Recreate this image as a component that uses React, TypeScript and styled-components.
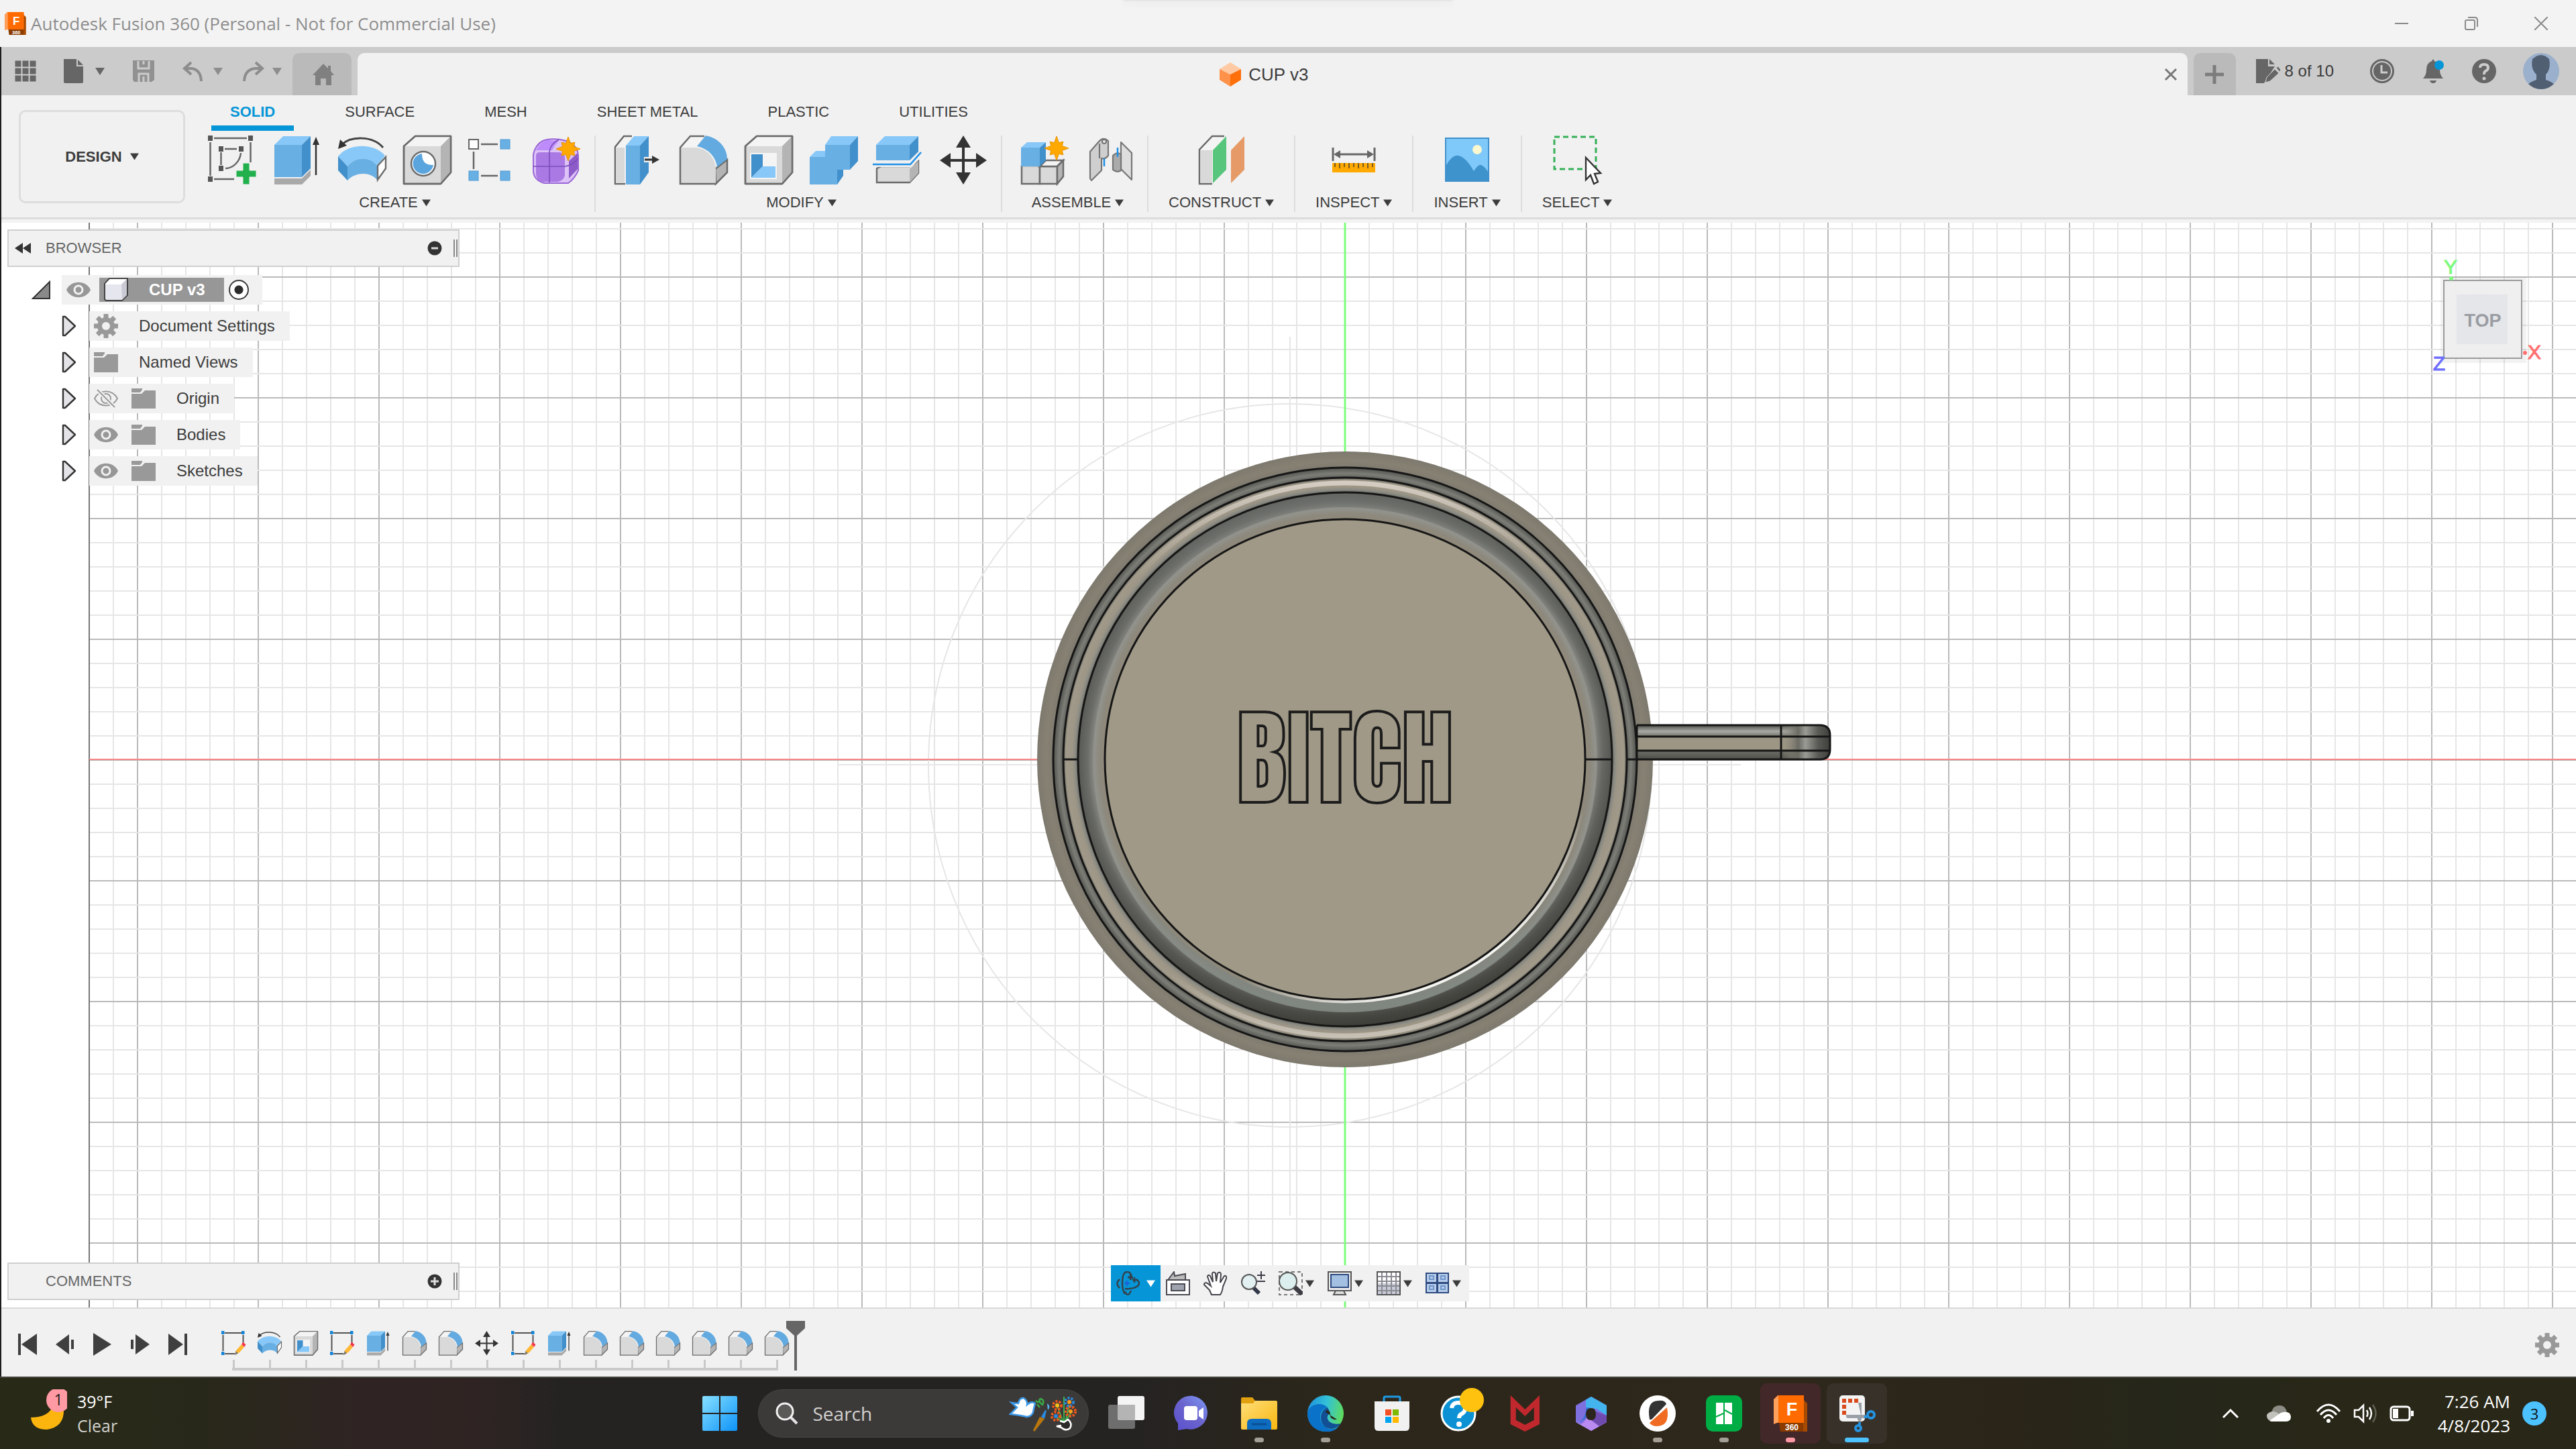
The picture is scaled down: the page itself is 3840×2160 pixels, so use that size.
import React from 'react';
import styled, { createGlobalStyle } from 'styled-components';

const UI = `"Liberation Sans", Arial, sans-serif`;
const SYS = `"Open Sans", "Noto Sans", sans-serif`;
const EDGE = '#6b6b6b';

const GlobalStyle = createGlobalStyle`
  * { box-sizing: border-box; }
  body { margin: 0; background: #f1f1f1; font-family: ${UI}; color: #3c3c3c; }
  button { font: inherit; color: inherit; background: none; border: 0; padding: 0; margin: 0; cursor: pointer; }
  svg { display: block; flex: none; }
  ul { list-style: none; margin: 0; padding: 0; }
`;

/* ---------- layout parts ---------- */

const Shell = styled.div`
  display: flex;
  flex-direction: column;
  min-height: 100vh;
`;

const AppFrame = styled.div`
  display: flex;
  flex-direction: column;
  flex: 1;
  border-left: 2px solid #1c1c1c;
`;

const TitleBar = styled.header`
  position: relative;
  display: flex;
  align-items: center;
  height: 70px;
  padding-left: 6px;
  background: #f3f3f3;
  font-family: ${SYS};
`;

const TitleText = styled.h1`
  flex: 1;
  margin: 0 0 0 6px;
  font-size: 26px;
  font-weight: 400;
  line-height: 36px;
  color: #8e8e8e;
`;

const DragHandle = styled.div`
  position: absolute;
  top: 0;
  left: 50%;
  width: 490px;
  height: 2px;
  margin-left: -245px;
  background: #e6e6e6;
  box-shadow: 0 2px 12px #dcdcdc;
`;

const WindowButton = styled.button`
  display: flex;
  align-items: center;
  justify-content: center;
  width: 104px;
  height: 68px;
`;

const TabBar = styled.div`
  display: flex;
  align-items: flex-end;
  height: 72px;
  background: #cbcbcb;
`;

const QuickAccess = styled.div`
  display: flex;
  align-items: center;
  align-self: center;
  gap: 39px;
  padding: 0 15px 0 18px;
`;

const ToolPair = styled.div`
  display: flex;
  align-items: center;
  gap: 10px;
`;

const HistoryTools = styled.div`
  display: flex;
  gap: 26px;
`;

const PlainButton = styled.button`
  display: flex;
  align-items: center;
  justify-content: center;
`;

const SmallTab = styled.button<{ $w: number }>`
  display: flex;
  align-items: center;
  justify-content: center;
  width: ${(p) => p.$w}px;
  height: 63px;
  margin-right: 9px;
  border-radius: 10px 10px 0 0;
  background: #bababa;
`;

const DocumentTab = styled.div`
  display: flex;
  flex: 1;
  align-items: center;
  height: 63px;
  margin-right: 9px;
  padding-left: 24px;
  border-radius: 10px 10px 0 0;
  background: #f1f1f1;
`;

const DocumentName = styled.div`
  display: flex;
  flex: 1;
  align-items: center;
  justify-content: center;
  gap: 10px;
  font-size: 26px;
  line-height: 32px;
`;

const CloseTab = styled(PlainButton)`
  width: 50px;
  height: 50px;
`;

const AccountTools = styled.div`
  display: flex;
  align-items: center;
  align-self: center;
  gap: 40px;
  padding: 0 25px 0 21px;
`;

const DocumentCount = styled.div`
  display: flex;
  align-items: center;
  gap: 6px;
  margin-right: 14px;
  font-size: 24px;
  line-height: 30px;
`;

const Ribbon = styled.div`
  display: flex;
  align-items: flex-start;
  height: 190px;
  padding-left: 26px;
  background: linear-gradient(#f1f1f1 182px, #dcdcdc 182px, #dcdcdc 185px, #f3f3f3 185px);
`;

const Workspace = styled.button`
  display: flex;
  align-items: center;
  justify-content: center;
  gap: 12px;
  width: 248px;
  height: 139px;
  margin: 22px 6px 0 0;
  border: 3px solid #dddddd;
  border-radius: 10px;
  font-size: 22px;
  font-weight: 700;
  line-height: 26px;
`;

const RibbonBody = styled.div`
  flex: 1;
`;

const RibbonTabs = styled.nav`
  display: flex;
  gap: 48px;
  padding-left: 33px;
`;

const RibbonTab = styled.button<{ $active?: boolean }>`
  height: 53px;
  padding: 4px 28px 0;
  border-bottom: 8px solid ${(p) => (p.$active ? '#0696d7' : 'transparent')};
  color: ${(p) => (p.$active ? '#0696d7' : 'inherit')};
  font-size: 22px;
  font-weight: ${(p) => (p.$active ? 700 : 400)};
  line-height: 26px;
`;

const Groups = styled.div`
  display: flex;
  padding-top: 7px;
`;

const Group = styled.section<{ $single?: boolean }>`
  display: flex;
  flex-direction: column;
  align-items: center;
  gap: 13px;
  height: 114px;
  padding: ${(p) => (p.$single ? '0 30px' : '0 19px 0 28px')};
  border-right: 2px solid #dcdcdc;
  &:last-child { border-right: 0; }
`;

const GroupIcons = styled.div`
  display: flex;
  gap: 25px;
`;

const GroupLabel = styled.button`
  display: flex;
  align-items: center;
  gap: 6px;
  font-size: 22px;
  line-height: 26px;
`;

const Viewport = styled.main`
  position: relative;
  display: flex;
  flex: 1;
  background: #ffffff;
`;

const Scene = styled.svg`
  position: absolute;
  inset: 0;
  width: 100%;
  height: 100%;
`;

const Overlay = styled.div`
  position: relative;
  display: grid;
  flex: 1;
  grid-template-columns: 1fr auto 1fr;
  grid-template-rows: 1fr auto;
  padding: 10px 40px 9px 9px;
`;

const CubeSlot = styled.div`
  display: flex;
  justify-content: flex-end;
  padding-top: 28px;
`;

const Browser = styled.aside`
  grid-column: 1 / 3;
`;

const PanelBar = styled.div`
  display: flex;
  align-items: center;
  width: 674px;
  height: 56px;
  padding: 0 1px 0 9px;
  border: 2px solid #cfcfcf;
  background: #f1f1f1;
  color: #666666;
  font-size: 22px;
  line-height: 26px;
`;

const PanelLead = styled.span`
  display: flex;
  width: 46px;
`;

const PanelTitle = styled.span`
  flex: 1;
`;

const Grip = styled.span`
  width: 6px;
  height: 26px;
  margin-left: 17px;
  border: solid #8a8a8a;
  border-width: 0 2px;
`;

const Tree = styled.ul`
  display: flex;
  flex-direction: column;
  gap: 10px;
  padding-top: 12px;
`;

const TreeRow = styled.li<{ $root?: boolean }>`
  display: flex;
  align-items: center;
  gap: ${(p) => (p.$root ? 16 : 19)}px;
  padding-left: ${(p) => (p.$root ? 36 : 81)}px;
`;

const TreeEntry = styled.div<{ $root?: boolean }>`
  display: flex;
  align-items: center;
  gap: ${(p) => (p.$root ? 7 : 20)}px;
  height: 44px;
  padding: 0 ${(p) => (p.$root ? 20 : 22)}px 0 7px;
  background: #f1f1f1;
  font-size: 24px;
  line-height: 30px;
`;

const TreeName = styled.span`
  padding-left: 11px;
`;

const Selected = styled.span`
  display: flex;
  align-items: center;
  gap: 30px;
  height: 36px;
  padding: 0 28px 0 6px;
  margin-left: 6px;
  background: #979797;
  color: #ffffff;
  font-size: 24px;
  font-weight: 700;
`;

const ActivateRadio = styled.input`
  appearance: none;
  width: 30px;
  height: 30px;
  margin: 0;
  border: 2px solid #3a3a3a;
  border-radius: 50%;
  background: radial-gradient(circle, #2b2b2b 6px, #ffffff 7px);
`;

const CommentsSlot = styled.div`
  margin-bottom: 2px;
`;

const NavBar = styled.div`
  display: flex;
  align-self: end;
  height: 54px;
  margin-left: 35px;
  background: #f1f1f1;
`;

const NavTool = styled.button<{ $active?: boolean }>`
  display: flex;
  align-items: center;
  gap: ${(p) => (p.$active ? 10 : 4)}px;
  padding: 0 ${(p) => (p.$active ? '8px 0 7px' : '12px 0 8px')};
  background: ${(p) => (p.$active ? '#0696d7' : 'transparent')};
  color: ${(p) => (p.$active ? '#ffffff' : '#3c3c3c')};
`;

const Timeline = styled.footer`
  display: flex;
  align-items: flex-end;
  height: 103px;
  padding: 0 25px 9px;
  border-top: 2px solid #d9d9d9;
  background: #f1f1f1;
`;

const Playback = styled.div`
  display: flex;
  gap: 28px;
  margin: 0 51px 21px 0;
`;

const Features = styled.div``;

const FeatureList = styled.ul`
  display: flex;
  gap: 18px;
`;

const Feature = styled.li`
  display: flex;
  flex-direction: column;
  align-items: center;
  gap: 6px;
  &::after { content: ''; width: 3px; height: 12px; background: #c9c9c9; }
`;

const Rail = styled.div`
  height: 4px;
  margin: 0 16px;
  background: #c9c9c9;
`;

const MarkerSlot = styled.div`
  flex: 1;
  margin-left: -4px;
`;

const SettingsSlot = styled(PlainButton)`
  margin-bottom: 20px;
`;

const Taskbar = styled.div`
  display: grid;
  grid-template-columns: 1fr auto 1fr;
  align-items: center;
  height: 108px;
  border-top: 2px solid #45453f;
  background: linear-gradient(90deg, #282a17 0%, #28281a 8%, #2f2423 14%, #302423 18%, #242322 22%, #252322 44%, #2c271a 52%, #2e271c 70%, #2a2518 78%, #25271a 84%, #282718 90%, #282718 100%);
  color: #ffffff;
  font-family: ${SYS};
  font-size: 25px;
  line-height: 36px;
`;

const Weather = styled.button`
  display: flex;
  align-items: center;
  gap: 15px;
  padding-left: 44px;
  text-align: left;
`;

const Muted = styled.div`
  color: #d0d0cb;
`;

const TaskItems = styled.div`
  display: flex;
  align-items: center;
  gap: 9px;
`;

const TaskButton = styled.button<{ $bg?: string }>`
  position: relative;
  display: flex;
  align-items: center;
  justify-content: center;
  width: 90px;
  height: 90px;
  border-radius: 10px;
  background: ${(p) => p.$bg || 'transparent'};
`;

const RunDot = styled.span<{ $w: number; $c: string }>`
  position: absolute;
  bottom: 2px;
  left: 50%;
  width: ${(p) => p.$w}px;
  height: 7px;
  border-radius: 4px;
  background: ${(p) => p.$c};
  transform: translateX(-50%);
`;

const SearchBox = styled.label`
  display: flex;
  align-items: center;
  width: 493px;
  height: 72px;
  margin: 0 2px 0 3px;
  padding: 0 16px 0 25px;
  border: 1px solid #484644;
  border-radius: 36px;
  background: #3c3a39;
`;

const SearchInput = styled.input`
  flex: 1;
  min-width: 0;
  margin-left: 22px;
  padding: 0;
  border: 0;
  outline: 0;
  background: transparent;
  color: #ffffff;
  font: 28px/36px ${SYS};
  &::placeholder { color: #d2d0ce; opacity: 1; }
`;

const Tray = styled.div`
  display: flex;
  align-items: center;
  justify-content: flex-end;
  gap: 18px;
  padding-right: 44px;
`;

const TrayGap = styled.span<{ $w: number }>`
  width: ${(p) => p.$w}px;
`;

const Clock = styled.div`
  font-size: 26px;
  text-align: right;
`;

const Badge = styled.span`
  display: flex;
  align-items: center;
  justify-content: center;
  width: 36px;
  height: 36px;
  border-radius: 50%;
  background: #4cc2ff;
  color: #101010;
  font-size: 22px;
`;

/* ---------- small glyphs ---------- */

const Caret = ({ w = 14, c = 'currentColor' }: { w?: number; c?: string }) => (
  <svg width={w} height={11} viewBox="0 0 14 11"><path d="M0 0H14L7 11Z" fill={c} /></svg>
);

const Tool = ({ size = 72, children }: { size?: number; children: React.ReactNode }) => (
  <svg width={size} height={size === 72 ? 74 : 37} viewBox="0 0 72 74" overflow="visible">{children}</svg>
);

const Star = ({ x, y }: { x: number; y: number }) => {
  const pts = Array.from({ length: 16 }, (_, i) => {
    const a = (i * Math.PI) / 8;
    const r = i % 2 ? 9 : i % 4 ? 14 : 18;
    return `${x + r * Math.sin(a)},${y - r * Math.cos(a)}`;
  }).join(' ');
  return <polygon points={pts} fill="#ffa800" stroke="#e89400" strokeWidth={1} />;
};

const Gear = ({ c = '#999999', hole = '#f1f1f1' }) => (
  <svg width={36} height={36} viewBox="-18 -18 36 36">
    {[0, 45, 90, 135].map((a) => <rect key={a} x={-3.5} y={-18} width={7} height={36} fill={c} transform={`rotate(${a})`} />)}
    <circle r={13} fill={c} />
    <circle r={6} fill={hole} />
  </svg>
);

const Eye = ({ off }: { off?: boolean }) => (
  <svg width={36} height={36} viewBox="0 0 36 36">
    {off ? (
      <g fill="none" stroke="#9a9a9a" strokeWidth={2}>
        <path d="M1 18C8 4 28 4 35 18C28 32 8 32 1 18Z" />
        <circle cx={18} cy={18} r={7} /><circle cx={18} cy={18} r={2} />
        <path d="M5 5L31 31" stroke="#f1f1f1" strokeWidth={6} /><path d="M5 5L31 31" />
      </g>
    ) : (
      <g>
        <path d="M0 18C7 3 29 3 36 18C29 33 7 33 0 18Z" fill="#979797" />
        <circle cx={18} cy={18} r={6} fill="#979797" stroke="#f1f1f1" strokeWidth={3} />
      </g>
    )}
  </svg>
);

const Folder = () => (
  <svg width={36} height={36} viewBox="0 0 36 36">
    <path d="M0 3H16V5L13 9H0Z" fill="#999999" />
    <path d="M0 11H15L20 6H36V33H0Z" fill="#999999" />
  </svg>
);

const Expander = () => (
  <svg width={22} height={32} viewBox="0 0 22 32"><path d="M2 2H5L20 16L5 30H2Z" fill="#e4e4e8" stroke="#333" strokeWidth={2.4} strokeLinejoin="round" /></svg>
);

/* ---------- modelling tool icons ---------- */

const SketchIcon = () => (
  <Tool>
    <g stroke="#666" strokeWidth={2.5} fill="none">
      <path d="M9 4H58M3.500 10V60M63.500 10V40M9 65H39M25 20H43M19.500 25V44M49 26C48 38 38 49 26 49" />
    </g>
    <g fill="#555"><path d="M0 0H7V8H0ZM60 0H67V8H60ZM0 61H7V69H0ZM16 16H23V24H16ZM46 16H53V24H46ZM16 45H23V53H16Z" /></g>
    <path d="M52 41H62V52H72V62H62V73H52V62H42V52H52Z" fill="#22b04c" stroke="#f1f1f1" strokeWidth={1} />
  </Tool>
);

const ExtrudeIcon = ({ size }: { size?: number }) => (
  <Tool size={size}>
    <path d="M2 64H43L56 51V60L43 73H2Z" fill="#a9a9a9" />
    <path d="M2 14L15 1H56L43 14Z" fill="#88c8f8" /><path d="M2 14H43V62H2Z" fill="#68afe4" /><path d="M43 14L56 1V49L43 62Z" fill="#4290cb" />
    <path d="M64 10V59" stroke="#333" strokeWidth={2.5} /><path d="M64 2L69 14H59Z" fill="#333" />
  </Tool>
);

const RevolveIcon = ({ size }: { size?: number }) => (
  <Tool size={size}>
    <path d="M4 15C18 0 52 0 67 18" fill="none" stroke="#444" strokeWidth={3} /><path d="M0 20L3 6L13 15Z" fill="#333" />
    <path d="M0 31C16 11 54 11 70 30L58 45C48 31 26 31 14 46Z" fill="#88c8f8" />
    <path d="M0 31L14 46V67L0 52Z" fill="#4290cb" />
    <path d="M14 46C26 31 48 31 58 45V66C48 54 26 54 14 67Z" fill="#68afe4" />
    <path d="M59 45L71 32V49L59 66Z" fill="#fff" stroke={EDGE} strokeWidth={2.4} />
  </Tool>
);

const Box = () => (
  <g stroke={EDGE} strokeWidth={2.5} strokeLinejoin="round">
    <path d="M1 16L18 1H71V55L56 72H1Z" fill="#d9d9d9" /><path d="M1 16L18 1H71L56 16Z" fill="#f4f4f4" stroke="none" />
    <path d="M56 16L71 1V55L56 72Z" fill="#b4b4b4" stroke="none" /><path d="M1 16L18 1H71V55L56 72H1Z" fill="none" />
  </g>
);

const HoleIcon = () => (
  <Tool>
    <Box />
    <circle cx={30} cy={42} r={18} fill="#fff" stroke={EDGE} strokeWidth={2.5} />
    <path d="M28 27C28 40 34 44 45 44C43 54 34 58 28 57C10 54 10 30 28 27Z" fill="#5aa5de" />
  </Tool>
);

const PatternIcon = () => (
  <Tool>
    <path d="M19 13H44M8 24V50M19 60H44" stroke="#666" strokeWidth={2.5} />
    <rect x={1} y={6} width={14} height={14} fill="#fff" stroke="#666" strokeWidth={2} />
    <g fill="#68afe4" stroke="#4d9ad3"><rect x={48} y={6} width={14} height={14} /><rect x={1} y={53} width={14} height={14} /><rect x={48} y={53} width={14} height={14} /></g>
  </Tool>
);

const FormIcon = () => (
  <Tool>
    <path d="M0 28Q3 14 14 8Q24 4 40 6Q66 10 67 30V52Q62 64 52 71H16Q0 66 0 52Z" fill="#dcc2f7" stroke="#9a66d8" strokeWidth={2} />
    <path d="M4 22Q10 10 20 7L38 8Q32 14 28 22Z" fill="#bd8cfa" />
    <path d="M4 30Q4 25 10 25H38Q46 26 47 32V60Q44 68 36 69H14Q5 67 4 58Z" fill="#aa79e4" />
    <path d="M53 38L66 26V50L53 64Z" fill="#8d5cc9" />
    <path d="M24 24V70M0 46H47Q58 45 67 34M24 24Q26 12 38 6" fill="none" stroke="#7c4cbb" strokeWidth={1.600} />
    <Star x={52} y={20} />
  </Tool>
);

const PressPullIcon = () => (
  <Tool>
    <path d="M16 72H1V17L14 1H26" fill="#f3f3f3" stroke={EDGE} strokeWidth={2.5} /><path d="M2 18H15V71H2Z" fill="#d9d9d9" />
    <path d="M17 15L29 1H51L38 15Z" fill="#88c8f8" /><path d="M17 15H38V73H17Z" fill="#68afe4" /><path d="M38 15L51 1V55L38 73Z" fill="#4290cb" />
    <path d="M44 36H58" stroke="#f1f1f1" strokeWidth={8} /><path d="M45 36H60" stroke="#333" strokeWidth={3} /><path d="M67 36L56 30V42Z" fill="#333" />
  </Tool>
);

const FilletIcon = ({ size }: { size?: number }) => (
  <Tool size={size}>
    <path d="M53 50L71 36V55L54 72Z" fill="#b4b4b4" stroke={EDGE} strokeWidth={2.500} />
    <path d="M1 18L16 1H38L25 18Z" fill="#f4f4f4" />
    <path d="M1 18H24C42 20 53 34 54 50V72H1Z" fill="#d9d9d9" />
    <path d="M37 1H16L1 18V72H54" fill="none" stroke={EDGE} strokeWidth={2.5} />
    <path d="M26 16L39 0C60 4 71 20 71 35L56 47C54 32 44 20 26 16Z" fill="#62aae0" />
  </Tool>
);

const ShellIcon = ({ size }: { size?: number }) => (
  <Tool size={size}>
    <Box />
    <path d="M8 26H48V65H8Z" fill="#f4f4f4" /><path d="M10 28H27V46L10 63Z" fill="#4290cb" /><path d="M27 46H46V63H10Z" fill="#88c8f8" />
  </Tool>
);

const CombineIcon = () => (
  <Tool>
    <path d="M0 32L9 23H24V32Z" fill="#88c8f8" /><path d="M0 32H23V14H60V51H41V73H0Z" fill="#68afe4" />
    <path d="M23 14L32 1H72L60 14Z" fill="#88c8f8" /><path d="M60 14L72 1V38L60 51Z" fill="#4290cb" /><path d="M41 51H50V60L41 73Z" fill="#4290cb" />
  </Tool>
);

const SplitIcon = () => (
  <Tool>
    <path d="M3 49L10 46H52L65 38V56L52 70H3Z" fill="#d9d9d9" stroke={EDGE} strokeWidth={2.400} /><path d="M52 50L65 38V56L52 70Z" fill="#b4b4b4" />
    <path d="M2 14L15 1H65L52 14Z" fill="#88c8f8" /><path d="M2 14H52V37H2Z" fill="#68afe4" /><path d="M52 14L65 1V24L52 37Z" fill="#4290cb" />
    <path d="M-3 43H53L70 26" fill="none" stroke="#f1f1f1" strokeWidth={8} /><path d="M-3 43H53L69 25" fill="none" stroke="#1d8fe6" strokeWidth={2.500} />
  </Tool>
);

const MoveIcon = ({ size }: { size?: number }) => (
  <Tool size={size}>
    <path d="M35 12V62M10 37H60" stroke="#333" strokeWidth={4} />
    <path d="M35 0L46 18H24ZM35 73L46 55H24ZM0 37L16 26V48ZM70 37L54 26V48Z" fill="#333" />
  </Tool>
);

const ComponentIcon = () => (
  <Tool>
    <g stroke={EDGE} strokeWidth={2.500}><path d="M1 45H28V72H1Z" fill="#d9d9d9" /><path d="M28 46H54V72H28Z" fill="#d9d9d9" /><path d="M28 46L37 37H63L54 46Z" fill="#f4f4f4" /><path d="M54 46L63 37V61L54 72Z" fill="#b4b4b4" /></g>
    <path d="M0 18L9 10H37L28 18Z" fill="#88c8f8" /><path d="M0 18H28V46H0Z" fill="#68afe4" /><path d="M28 18L37 10V37L28 46Z" fill="#4290cb" />
    <Star x={53} y={19} />
  </Tool>
);

const JointIcon = () => (
  <Tool>
    <g stroke="#777" strokeWidth={2.2} strokeLinejoin="round">
      <path d="M6 24L20 8Q26 2 33 8V30Q28 36 23 34V52L8 67L6 64Z" fill="#cfcfcf" />
      <path d="M20 12V34" /><circle cx={27} cy={9} r={3} fill="#eee" />
      <path d="M52 10L68 26V66L52 50Z" fill="#dedede" /><path d="M40 30Q46 24 52 28V52Q46 56 40 51Z" fill="#aaa" />
    </g>
    <path d="M27 34V46M47 18V32" stroke="#1d8fe6" strokeWidth={2.5} />
  </Tool>
);

const PlaneIcon = () => (
  <Tool>
    <path d="M22 72H3V21L22 1H40" fill="#f4f4f4" stroke={EDGE} strokeWidth={2.5} /><path d="M4 22H22V70H4Z" fill="#d9d9d9" />
    <path d="M23 22L43 1V51L23 71Z" fill="#57c67c" /><path d="M50 22L70 1V51L50 71Z" fill="#e59a67" />
  </Tool>
);

const MeasureIcon = () => (
  <Tool>
    <path d="M5 18V38M67 18V38M12 28H60" stroke="#666" strokeWidth={3} /><path d="M6 28L16 22V34ZM66 28L56 22V34Z" fill="#666" />
    <path d="M4 41H68V55H4Z" fill="#ffaa00" /><path d="M8 41V47M15 41V49M22 41V47M29 41V49M36 41V47M43 41V49M50 41V47M57 41V49M64 41V47" stroke="#7a5a20" strokeWidth={2} />
  </Tool>
);

const InsertIcon = () => (
  <Tool>
    <rect x={4} y={4} width={64} height={64} fill="#7fc8fa" stroke="#3f90cc" strokeWidth={2} /><circle cx={51} cy={21} r={7} fill="#fbf8cf" />
    <path d="M5 44Q14 28 23 30Q34 32 46 53Q53 42 57 44Q62 46 67 54V67H5Z" fill="#3f93cd" />
  </Tool>
);

const SelectIcon = () => (
  <Tool>
    <rect x={2} y={2} width={62} height={48} fill="none" stroke="#35b058" strokeWidth={3} strokeDasharray="8 5" />
    <path d="M49 33V66L56 59L61 72L67 69L62 57L71 56Z" fill="#fff" stroke="#333" strokeWidth={2.400} />
  </Tool>
);

const SketchEditIcon = ({ size }: { size?: number }) => (
  <Tool size={size}>
    <path d="M10 6H60M5 12V60M65 12V40M10 68H40" stroke="#555" strokeWidth={4} />
    <path d="M0 0H9V10H0ZM60 0H69V10H60ZM0 62H9V72H0Z" fill="#1583d6" />
    <path d="M40 72L44 58L60 40L68 48L54 64Z" fill="#ffb833" /><path d="M60 40L65 33L73 41L68 48Z" fill="#f4384c" /><path d="M40 72L43 60L50 67Z" fill="#777" />
  </Tool>
);

/* ---------- 3D scene ---------- */

const CX = 2005;
const CY = 800;

const vLines: { x: number; major: boolean }[] = [];
for (let i = -51; i <= 51; i++) vLines.push({ x: CX + i * 36, major: i % 5 === 0 });
const hLines: { y: number; major: boolean }[] = [];
for (let i = -22; i <= 22; i++) hLines.push({ y: CY + 1 + i * 36, major: i % 5 === 0 });

const CupScene = () => (
  <Scene viewBox="2 0 3838 1617" preserveAspectRatio="xMidYMid slice" aria-label="Top view of cup model">
    <defs>
      <radialGradient id="outer" gradientUnits="userSpaceOnUse" cx={CX} cy={CY} r={459}>
        <stop offset="0.940" stopColor="#7c786e" /><stop offset="0.970" stopColor="#878173" /><stop offset="1" stopColor="#7e796e" />
      </radialGradient>
      <radialGradient id="groove" gradientUnits="userSpaceOnUse" cx={CX} cy={CY} r={435}>
        <stop offset="0.965" stopColor="#5d5e59" /><stop offset="0.980" stopColor="#7c7e77" /><stop offset="1" stopColor="#52534e" />
      </radialGradient>
      <radialGradient id="lip" gradientUnits="userSpaceOnUse" cx={CX} cy={CY} r={420}>
        <stop offset="0.945" stopColor="#65655f" /><stop offset="0.958" stopColor="#8c8c85" /><stop offset="0.968" stopColor="#9d9686" /><stop offset="0.990" stopColor="#a19a8a" /><stop offset="1" stopColor="#6e6e66" />
      </radialGradient>
      <radialGradient id="wall" gradientUnits="userSpaceOnUse" cx={CX} cy={CY} r={398}>
        <stop offset="0.900" stopColor="#8f8879" /><stop offset="0.920" stopColor="#8d897d" /><stop offset="0.940" stopColor="#92938d" /><stop offset="0.965" stopColor="#6d6f6b" /><stop offset="1" stopColor="#565853" />
      </radialGradient>
      <linearGradient id="shade" gradientUnits="userSpaceOnUse" x1={CX - 80} y1={CY - 380} x2={CX + 60} y2={CY + 390}>
        <stop offset="0" stopColor="#6f716e" stopOpacity="0.500" /><stop offset="0.450" stopColor="#5a5b55" stopOpacity="0.100" /><stop offset="1" stopColor="#33322d" stopOpacity="0.700" />
      </linearGradient>
      <linearGradient id="shine" gradientUnits="userSpaceOnUse" x1={CX} y1={CY - 420} x2={CX} y2={CY + 420}>
        <stop offset="0" stopColor="#d8d0c6" /><stop offset="0.180" stopColor="#c9c2b6" stopOpacity="0" /><stop offset="0.880" stopColor="#c9c2b6" stopOpacity="0" /><stop offset="1" stopColor="#cac3b8" />
      </linearGradient>
      <linearGradient id="glint" gradientUnits="userSpaceOnUse" x1={CX - 120} y1={CY - 20} x2={CX + 70} y2={CY + 360}>
        <stop offset="0.700" stopColor="#f4f4f0" stopOpacity="0" /><stop offset="1" stopColor="#f4f4f0" />
      </linearGradient>
      <linearGradient id="coolBand" gradientUnits="userSpaceOnUse" x1={CX} y1={CY + 150} x2={CX} y2={CY + 380}>
        <stop offset="0" stopColor="#7f8680" stopOpacity="0" /><stop offset="1" stopColor="#7f8680" />
      </linearGradient>
      <linearGradient id="handle" x1="0" y1="0" x2="0" y2="1">
        <stop offset="0" stopColor="#4e4f4a" /><stop offset="0.180" stopColor="#a9aaa4" /><stop offset="0.300" stopColor="#7d7d75" /><stop offset="0.340" stopColor="#9d9685" /><stop offset="0.720" stopColor="#9d9685" /><stop offset="0.780" stopColor="#6a6b64" /><stop offset="1" stopColor="#4e4f49" />
      </linearGradient>
      <linearGradient id="handleEnd" x1="0" y1="0" x2="1" y2="0">
        <stop offset="0" stopColor="#9a9484" stopOpacity="0" /><stop offset="0.350" stopColor="#6b6b64" /><stop offset="0.500" stopColor="#9a9b94" /><stop offset="0.750" stopColor="#5a5b56" /><stop offset="1" stopColor="#3e3f3a" />
      </linearGradient>
    </defs>
    {vLines.filter((l) => l.x > 140).map((l) => (
      <path key={l.x} d={`M${l.x} 0V1617`} stroke={l.major ? '#bababa' : '#e6e6e6'} strokeWidth={2} />
    ))}
    {hLines.map((l) => (
      <path key={l.y} d={`M133 ${l.y}H3840`} stroke={l.major ? '#bababa' : '#e6e6e6'} strokeWidth={2} />
    ))}
    <path d="M133 0V1617" stroke="#777777" strokeWidth={2} />
    <g fill="none" stroke="#e6e6e6" strokeWidth={2}>
      <circle cx={1923} cy={809} r={539} />
      <path d="M1249 808H2595M1923 170V1480" />
    </g>
    <path d={`M133 ${CY}H3840`} stroke="#f98585" strokeWidth={2} />
    <path d={`M${CX} 0V1617`} stroke="#7dff7d" strokeWidth={3} />

    <circle cx={CX} cy={CY} r={459} fill="url(#outer)" />
    <circle cx={CX} cy={CY} r={435} fill="url(#groove)" />
    <circle cx={CX} cy={CY} r={420} fill="url(#lip)" />
    <circle cx={CX} cy={CY} r={412} fill="none" stroke="url(#shine)" strokeWidth={7} />
    <circle cx={CX} cy={CY} r={398} fill="url(#wall)" />
    <circle cx={CX} cy={CY} r={387} fill="none" stroke="url(#shade)" strokeWidth={22} />
    <circle cx={CX} cy={CY} r={370} fill="none" stroke="url(#coolBand)" strokeWidth={14} />
    <circle cx={CX} cy={CY} r={361} fill="none" stroke="url(#glint)" strokeWidth={5} />
    <circle cx={CX} cy={CY} r={358} fill="#a09987" />
    <g fill="none" stroke="#161616" strokeWidth={3}>
      <circle cx={CX} cy={CY} r={435} /><circle cx={CX} cy={CY} r={420} /><circle cx={CX} cy={CY} r={398} /><circle cx={CX} cy={CY} r={358} />
      <path d={`M1585 ${CY}H1607M2363 ${CY}H2403M2425 ${CY}H2442`} />
    </g>

    <path d="M2440 749H2713Q2728 749 2728 764V785Q2728 800 2713 800H2440Z" fill="url(#handle)" />
    <path d="M2655 749H2713Q2728 749 2728 764V785Q2728 800 2713 800H2655Z" fill="url(#handleEnd)" />
    <path d="M2440 749H2713Q2728 749 2728 764V785Q2728 800 2713 800H2440M2440 766H2728M2440 787H2728M2655 749V800M2440 749V800" fill="none" stroke="#161616" strokeWidth={3} />

    <text x={CX} y={864} textAnchor="middle" fontFamily="Impact, Anton, 'Liberation Sans Narrow', 'Roboto Condensed', 'Liberation Sans', sans-serif" fontWeight={400} fontSize={156} fill="#a09987" stroke="#1c1c1c" strokeWidth={4}>BITCH</text>
  </Scene>
);

const ViewCube = () => (
  <svg width={180} height={190} viewBox="3620 370 180 190" fontFamily={UI}>
    <rect x={3638} y={413} width={128} height={128} fill="#000" opacity={0.050} />
    <rect x={3643} y={418} width={116} height={116} fill="#efeff0" fillOpacity={0.930} stroke="#9a9a9a" strokeWidth={2} />
    <rect x={3662} y={439} width={76} height={74} fill="#e5e6e9" />
    <text x={3701} y={487} textAnchor="middle" fontSize={27} fontWeight={700} fill="#9a9ca3">TOP</text>
    <g textAnchor="middle" fontSize={30} strokeWidth={1}>
      <text x={3653} y={408} fill="#7dfa7d" stroke="#7dfa7d">Y</text>
      <text x={3636} y={552} fill="#6e6eff" stroke="#6e6eff">Z</text>
      <text x={3778} y={535} fill="#ff7070" stroke="#ff7070">X</text>
    </g>
    <circle cx={3764} cy={526} r={3} fill="#ff7070" />
    <circle cx={3654} cy={415} r={3} fill="#7dfa7d" />
  </svg>
);

/* ---------- data ---------- */

const ribbonTabs = ['SOLID', 'SURFACE', 'MESH', 'SHEET METAL', 'PLASTIC', 'UTILITIES'];

const groups = [
  { label: 'CREATE', icons: [SketchIcon, ExtrudeIcon, RevolveIcon, HoleIcon, PatternIcon, FormIcon] },
  { label: 'MODIFY', icons: [PressPullIcon, FilletIcon, ShellIcon, CombineIcon, SplitIcon, MoveIcon] },
  { label: 'ASSEMBLE', icons: [ComponentIcon, JointIcon] },
  { label: 'CONSTRUCT', icons: [PlaneIcon] },
  { label: 'INSPECT', icons: [MeasureIcon] },
  { label: 'INSERT', icons: [InsertIcon] },
  { label: 'SELECT', icons: [SelectIcon] },
];

const treeRows = [
  { name: 'Document Settings', icons: [<Gear key="g" />] },
  { name: 'Named Views', icons: [<Folder key="f" />] },
  { name: 'Origin', icons: [<Eye key="e" off />, <Folder key="f" />] },
  { name: 'Bodies', icons: [<Eye key="e" />, <Folder key="f" />] },
  { name: 'Sketches', icons: [<Eye key="e" />, <Folder key="f" />] },
];

const history = [
  SketchEditIcon, RevolveIcon, ShellIcon, SketchEditIcon, ExtrudeIcon, FilletIcon, FilletIcon, MoveIcon,
  SketchEditIcon, ExtrudeIcon, FilletIcon, FilletIcon, FilletIcon, FilletIcon, FilletIcon, FilletIcon,
];

const playback = [
  { label: 'Go to start', d: 'M0 2H4V34H0ZM28 2V34L5 18Z' },
  { label: 'Step back', d: 'M0 18L20 3V33ZM23 11H27V25H23Z' },
  { label: 'Play', d: 'M0 1L27 18L0 35Z' },
  { label: 'Step forward', d: 'M0 11H4V25H0ZM7 3L28 18L7 33Z' },
  { label: 'Go to end', d: 'M0 2L22 18L0 34ZM24 2H28V34H24Z' },
];

const navTools = [
  { label: 'Orbit', active: true, caret: true, icon: (
    <g fill="none" stroke="#34424c" strokeWidth={2.500}><path d="M14 34Q10 28 10 18Q10 1 17 1Q24 1 24 12M14 26Q26 27 33 22Q38 17 31 12M6 12Q-1 18 6 25M14 30Q18 40 23 29" /><path d="M22 5V13M18 9H26M28 9V17M25 13H33" /><path d="M17 14V22M13 18H21" stroke="#1a63d8" /></g>) },
  { label: 'Look at', icon: (
    <g stroke="#4a4a52" strokeWidth={2}><path d="M3 13L12 1L13 7L29 4V13" fill="#bbb" /><rect x={1} y={13} width={34} height={22} fill="#fff" /><rect x={8} y={19} width={20} height={10} fill="#9ea3ad" /></g>) },
  { label: 'Pan', icon: (
    <path d="M12 35L9 28L1 20Q1 16 6 18L11 22L6 8Q7 4 10 7L14 16L13 3Q15 0 18 3L19 15L21 3Q25 0 26 4L25 17L31 7Q35 6 34 11L29 23Q28 31 25 35Z" fill="#fff" stroke="#44444c" strokeWidth={2} />) },
  { label: 'Zoom', icon: (
    <g><path d="M18 24L27 33" stroke="#33384a" strokeWidth={6} /><circle cx={12} cy={16} r={11} fill="#e2f0f2" stroke="#555" strokeWidth={2} /><path d="M30 0V12M24 6H36M24 15H36" stroke="#3c3c4a" strokeWidth={2} /></g>) },
  { label: 'Fit', caret: true, icon: (
    <g><rect x={1} y={1} width={34} height={34} fill="none" stroke="#777" strokeWidth={2} strokeDasharray="5 4" /><path d="M22 22L35 34" stroke="#3c3c44" strokeWidth={7} /><circle cx={14} cy={15} r={13} fill="#dcefee" stroke="#555" strokeWidth={2} /></g>) },
  { label: 'Display settings', caret: true, icon: (
    <g><path d="M12 29H24L27 35H9Z" fill="#ddd" stroke="#555" strokeWidth={2} /><rect x={1} y={1} width={34} height={28} fill="#eee" stroke="#555" strokeWidth={2} /><rect x={5} y={5} width={26} height={19} fill="#a3c0e2" stroke="#2d4a80" strokeWidth={2} /></g>) },
  { label: 'Grid and snaps', caret: true, icon: (
    <g><rect x={1} y={1} width={34} height={34} fill="#fff" /><rect x={1} y={18} width={34} height={17} fill="#c8ccd8" /><path d="M8 1V35M15 1V35M22 1V35M29 1V35M1 8H35M1 15H35M1 22H35M1 29H35" stroke="#8a8a92" strokeWidth={2} /><rect x={1} y={1} width={34} height={34} fill="none" stroke="#555" strokeWidth={2} /></g>) },
  { label: 'Viewports', caret: true, icon: (
    <g fill="#b7cdeb" stroke="#2d4a80" strokeWidth={2}><rect x={1} y={3} width={16} height={14} /><rect x={18} y={3} width={16} height={14} /><rect x={1} y={18} width={16} height={14} /><rect x={18} y={18} width={16} height={14} /><path d="M6 7H12V12H6ZM23 7H29V12H23ZM6 22H12V27H6ZM23 22H29V27H23Z" fill="none" stroke="#6f95ca" /></g>) },
];

const FusionLogo = ({ w }: { w: number }) => (
  <svg width={w} height={w} viewBox="0 0 54 54">
    <path d="M10 40H50V54H12Z" fill="#8c3b00" /><path d="M46 6L52 12V54H46Z" fill="#a84a00" />
    <path d="M2 6L8 0H47V41H8L2 42Z" fill="#ff6b00" /><path d="M2 6L9 0V40L2 43Z" fill="#ffa05c" />
    <text x={29} y={30} textAnchor="middle" fontFamily={UI} fontWeight={700} fontSize={27} fill="#fff">F</text>
    <text x={29} y={52} textAnchor="middle" fontFamily={UI} fontWeight={700} fontSize={12} fill="#fff">360</text>
  </svg>
);

const taskApps: { label: string; run?: [number, string]; bg?: string; icon: React.ReactNode }[] = [
  { label: 'Task view', icon: <g><rect x={0} y={14} width={40} height={36} rx={3} fill="#6e6e6e" /><rect x={14} y={1} width={40} height={36} rx={3} fill="#f4f4f4" /><path d="M14 14H40V37H17Q14 37 14 34Z" fill="#b4b4b4" /></g> },
  { label: 'Chat', icon: <g transform="translate(4 0)"><path d="M1 52V42A25 25 0 1 1 14 50Z" fill="url(#chat)" /><rect x={10} y={16} width={20} height={21} rx={4} fill="#fff" /><path d="M32 23L39 18V36L32 31Z" fill="#fff" /></g> },
  { label: 'File Explorer', run: [14, '#a39f96'], icon: <g><path d="M0 5Q0 3 2 3H17L21 8V12H0Z" fill="#e0a010" /><path d="M0 12H18L21 8H52Q54 8 54 10V49Q54 51 52 51H2Q0 51 0 49Z" fill="url(#fold)" /><path d="M9 51V42Q9 35 16 35H38Q45 35 45 42V51Z" fill="#0d6cbf" /><path d="M16 43H38" stroke="#0a4f93" strokeWidth={3} /></g> },
  { label: 'Edge', run: [14, '#a39f96'], icon: <g><circle cx={27} cy={27} r={27} fill="url(#edge)" /><path d="M0 27C1 14 20 8 30 18C18 20 14 38 28 48C34 52 42 50 47 46C41 54 32 55 26 54C10 53 0 42 0 27Z" fill="#0b72c9" /><path d="M30 18C18 22 16 40 28 48C36 52 44 49 50 42C42 44 32 42 30 35C28 30 34 28 32 22Z" fill="#124f94" /><path d="M27 25C28 20 34 22 34 28C33 32 36 37 44 36" fill="#2c271a" /></g> },
  { label: 'Microsoft Store', icon: <g><path d="M15 12V4Q15 2 17 2H37Q39 2 39 4V12" fill="none" stroke="#1e9be6" strokeWidth={3} /><path d="M1 9H53V47Q53 53 47 53H7Q1 53 1 47Z" fill="#f1f1f1" /><path d="M17 21H26V30H17Z" fill="#f25022" /><path d="M28 21H37V30H28Z" fill="#7fba00" /><path d="M17 32H26V41H17Z" fill="#00a4ef" /><path d="M28 32H37V41H28Z" fill="#ffb900" /></g> },
  { label: 'Get Help', icon: <g><circle cx={27} cy={27} r={25} fill="#0c92d4" stroke="#fff" strokeWidth={3} /><path d="M17 19Q18 11 27 11Q37 11 37 20Q37 25 31 28Q28 30 28 34" fill="none" stroke="#fff" strokeWidth={6} /><circle cx={28} cy={43} r={4} fill="#fff" /><circle cx={47} cy={7} r={18} fill="#ffc20e" /></g> },
  { label: 'McAfee', icon: <path d="M3 0L27 21L51 0V43L27 54L3 43ZM12 18V37L27 44L42 37V18L27 31Z" transform="translate(3 0) scale(.9 1)" fill="#c1282d" fillRule="evenodd" /> },
  { label: 'Microsoft 365', icon: <g><path d="M27 2L50 15V40L27 53L4 40V15Z" fill="#7f70e0" /><path d="M19 6L27 2V22L19 28V34L8 42Q17 34 19 24Z" fill="#3b6fd4" /><path d="M19 7L27 2L50 15V30L35 20L19 18Z" fill="#44b4ee" /><path d="M4 40L12 43Q18 39 20 34L30 40L27 53Z" fill="#b98af0" /><path d="M22 38L50 30V40L27 53Z" fill="#b98af0" /><path d="M34 24L50 30V40L39 46L27 37Z" fill="#6f4bb0" /><path d="M27 19Q34 19 34 28Q34 37 27 37Q19 37 19 28Q19 19 27 19Z" fill="#2c251b" /></g> },
  { label: 'Slicer', run: [14, '#a39f96'], icon: <g><circle cx={27} cy={27} r={27} fill="#fff" /><path d="M15 36Q10 8 28 8Q38 7 40 13L18 36Z" fill="#333" /><path d="M41 18Q46 46 26 46Q18 46 15 41Z" fill="#f06c22" /></g> },
  { label: 'Desktop app', run: [14, '#a39f96'], icon: <g><rect x={0} y={0} width={54} height={54} rx={10} fill="#00ad45" /><path d="M15 11H26V43H15ZM28 11H39V43H28Z" fill="#fff" /><path d="M15 32L26 27M28 22L39 28" stroke="#00ad45" strokeWidth={2} /></g> },
  { label: 'Fusion 360', run: [14, '#ff99a4'], bg: '#43282a', icon: null },
  { label: 'Snipping Tool', run: [36, '#4cc2ff'], bg: '#37312a', icon: <g><rect x={1} y={0} width={38} height={39} rx={5} fill="#f3f3f3" /><g fill="#d84b1c"><path d="M5 5H11V11H5ZM14 5H20V11H14ZM23 5H29V11H23ZM5 14H11V20H5ZM5 23H11V29H5Z" /></g><path d="M29 11H34V36L31 40L28 36V34H14Q11 34 11 31V29H40V34H34" fill="#9aa0a8" /><g fill="none" stroke="#2493e0" strokeWidth={4}><circle cx={48} cy={29} r={5} /><path d="M42 32H38M31 40V44" /><circle cx={29} cy={49} r={4} /></g></g> },
];

/* ---------- sections ---------- */

const TopBars = () => (
  <>
    <TabBar>
      <QuickAccess>
        <PlainButton aria-label="Data panel">
          <svg width={36} height={36} viewBox="0 0 36 36" fill="#666"><path d="M2 2H12V12H2ZM13 2H23V12H13ZM24 2H34V12H24ZM2 13H12V23H2ZM13 13H23V23H13ZM24 13H34V23H24ZM2 24H12V34H2ZM13 24H23V34H13ZM24 24H34V34H24Z" stroke="#cbcbcb" /></svg>
        </PlainButton>
        <ToolPair>
          <PlainButton aria-label="File"><svg width={36} height={36} viewBox="0 0 36 36" fill="#666"><path d="M0 0H19V11H29V34Q29 36 27 36H2Q0 36 0 34Z" /><path d="M21 1L29 9H21Z" /></svg></PlainButton>
          <Caret w={16} c="#666" />
        </ToolPair>
        <PlainButton aria-label="Save"><svg width={36} height={36} viewBox="0 0 36 36"><path d="M2 2H34V31L30 34H4L2 31Z" fill="#919191" /><path d="M10 3V14H26V3M11 34V22H25V34M18 26V34M18 3V8" fill="none" stroke="#cbcbcb" strokeWidth={3} /></svg></PlainButton>
        <HistoryTools>
          <ToolPair>
            <PlainButton aria-label="Undo"><svg width={36} height={36} viewBox="0 0 36 36" fill="none" stroke="#8d8d8d" strokeWidth={4}><path d="M14 5L4 14L14 23M4 14H12Q28 14 29 33" /></svg></PlainButton>
            <Caret w={16} c="#8d8d8d" />
          </ToolPair>
          <ToolPair>
            <PlainButton aria-label="Redo"><svg width={36} height={36} viewBox="0 0 36 36" fill="none" stroke="#8d8d8d" strokeWidth={4}><path d="M22 5L32 14L22 23M32 14H24Q6 14 5 33" /></svg></PlainButton>
            <Caret w={16} c="#8d8d8d" />
          </ToolPair>
        </HistoryTools>
      </QuickAccess>
      <SmallTab $w={88} aria-label="Home"><svg width={36} height={32} viewBox="0 0 36 32" fill="#808080"><path d="M20 0L27 7V3H31V11L36 17H32V32H24V22H16V32H8V17H4Z" /></svg></SmallTab>
      <DocumentTab>
        <DocumentName>
          <svg width={34} height={36} viewBox="0 0 34 36"><path d="M17 0L33 10L17 18L1 10Z" fill="#ffc9a3" /><path d="M1 10L17 18V36L1 26Z" fill="#ff924a" /><path d="M33 10L17 18V36L33 26Z" fill="#ff6f0a" /></svg>
          <span>CUP v3</span>
        </DocumentName>
        <CloseTab aria-label="Close tab"><svg width={20} height={20} viewBox="0 0 20 20"><path d="M2 2L18 18M18 2L2 18" stroke="#777" strokeWidth={3} /></svg></CloseTab>
      </DocumentTab>
      <SmallTab $w={63} aria-label="New tab"><svg width={30} height={30} viewBox="0 0 30 30"><path d="M15 1V29M1 15H29" stroke="#7c7c7c" strokeWidth={5} /></svg></SmallTab>
      <AccountTools>
        <DocumentCount>
          <svg width={37} height={36} viewBox="0 0 37 36" fill="#666"><path d="M0 0H18V11H28L12 36H0Z" /><path d="M20 0L28 8H20Z" /><path d="M14 35L16 27L28 15L34 21L21 33ZM30 13L33 11L37 16L35 19Z" stroke="#cbcbcb" /></svg>
          <span>8 of 10</span>
        </DocumentCount>
        <PlainButton aria-label="Job status"><svg width={36} height={36} viewBox="0 0 36 36"><circle cx={18} cy={18} r={16.500} fill="none" stroke="#666" strokeWidth={3} /><circle cx={18} cy={18} r={13} fill="#666" /><path d="M17 9V20H26" fill="none" stroke="#ccc" strokeWidth={3} /></svg></PlainButton>
        <PlainButton aria-label="Notifications"><svg width={36} height={36} viewBox="0 0 36 36"><path d="M18 0L20 3Q28 6 28 16Q28 24 33 29H3Q8 24 8 16Q8 6 16 3ZM13 32H23Q22 36 18 36Q14 36 13 32Z" fill="#666" /><circle cx={27} cy={9} r={7} fill="#0696d7" /></svg></PlainButton>
        <PlainButton aria-label="Help"><svg width={36} height={36} viewBox="0 0 36 36"><circle cx={18} cy={18} r={18} fill="#666" /><path d="M12 13Q12 8 18 8Q24 8 24 13Q24 16 20 18Q18 19 18 23" fill="none" stroke="#ccc" strokeWidth={4} /><circle cx={18} cy={29} r={2.500} fill="#ccc" /></svg></PlainButton>
        <PlainButton aria-label="Account"><svg width={54} height={54} viewBox="0 0 54 54"><clipPath id="av"><circle cx={27} cy={27} r={27} /></clipPath><g clipPath="url(#av)"><rect width={54} height={54} fill="#9bb0cc" /><path d="M14 9Q27 -3 39 9Q42 24 34 32V40Q44 43 50 50V54H4V50Q10 43 20 40V32Q11 24 14 9Z" fill="#515f73" /></g></svg></PlainButton>
      </AccountTools>
    </TabBar>
    <Ribbon>
      <Workspace>DESIGN <Caret w={13} /></Workspace>
      <RibbonBody>
        <RibbonTabs>
          {ribbonTabs.map((t, i) => <RibbonTab key={t} $active={i === 0}>{t}</RibbonTab>)}
        </RibbonTabs>
        <Groups>
          {groups.map((g) => (
            <Group key={g.label} $single={g.icons.length === 1}>
              <GroupIcons>
                {g.icons.map((I, i) => <PlainButton key={i} aria-label={`${g.label} tool ${i + 1}`}><I /></PlainButton>)}
              </GroupIcons>
              <GroupLabel>{g.label} <Caret w={13} /></GroupLabel>
            </Group>
          ))}
        </Groups>
      </RibbonBody>
    </Ribbon>
  </>
);

const BrowserPanel = () => (
  <Browser>
    <PanelBar>
      <PanelLead><svg width={24} height={16} viewBox="0 0 24 16"><path d="M0 8L12 0V16ZM12 8L24 0V16Z" fill="#333" /></svg></PanelLead>
      <PanelTitle>BROWSER</PanelTitle>
      <PlainButton aria-label="Collapse browser"><svg width={22} height={22} viewBox="0 0 22 22"><circle cx={11} cy={11} r={10.500} fill="#333" /><path d="M6 11H16" stroke="#ddd" strokeWidth={3} /></svg></PlainButton>
      <Grip />
    </PanelBar>
    <Tree>
      <TreeRow $root>
        <svg width={29} height={28} viewBox="0 0 29 28"><path d="M2 27H27V2Z" fill="#8a8a8a" stroke="#333" strokeWidth={2} /></svg>
        <TreeEntry $root>
          <Eye />
          <Selected>
            <svg width={38} height={36} viewBox="0 0 38 36"><path d="M2 9L9 1H36V26L28 34H4L2 32Z" fill="#e6e7ee" stroke="#444" strokeWidth={2} /><path d="M3 9L10 2H35L27 10H3Z" fill="#fff" /><path d="M27 10L35 2V26L28 33Z" fill="#c9cad4" /></svg>
            <span id="root-name">CUP v3</span>
          </Selected>
          <ActivateRadio type="radio" name="component" defaultChecked aria-labelledby="root-name" />
        </TreeEntry>
      </TreeRow>
      {treeRows.map((r) => (
        <TreeRow key={r.name}>
          <Expander />
          <TreeEntry>
            {r.icons}
            <TreeName>{r.name}</TreeName>
          </TreeEntry>
        </TreeRow>
      ))}
    </Tree>
  </Browser>
);

const HistoryBar = () => (
  <Timeline>
    <Playback>
      {playback.map((p) => (
        <PlainButton key={p.label} aria-label={p.label}><svg width={28} height={36} viewBox="0 0 28 36"><path d={p.d} fill="#3f3f3f" /></svg></PlainButton>
      ))}
    </Playback>
    <Features>
      <FeatureList>
        {history.map((I, i) => <Feature key={i}><I size={36} /></Feature>)}
      </FeatureList>
      <Rail />
    </Features>
    <MarkerSlot><svg width={28} height={74} viewBox="0 0 28 74"><path d="M0 0H28V11L16 22V74H12V22L0 11Z" fill="#666" /></svg></MarkerSlot>
    <SettingsSlot aria-label="Timeline settings"><Gear /></SettingsSlot>
  </Timeline>
);

const SystemBar = () => (
  <Taskbar>
    <Weather>
      <svg width={56} height={72} viewBox="44 2068 56 72">
        <path d="M76 2098Q68 2110 46 2110Q48 2128 70 2128Q96 2124 95 2098Z" fill="#fcb50f" />
        <circle cx={87} cy={2084} r={18} fill="#ff99a4" />
        <text x={87} y={2092} textAnchor="middle" fontFamily="Open Sans, sans-serif" fontSize={23} fill="#1c1c1c">1</text>
      </svg>
      <div>
        <div>39°F</div>
        <Muted>Clear</Muted>
      </div>
    </Weather>
    <TaskItems>
      <TaskButton aria-label="Start">
        <svg width={54} height={54} viewBox="0 0 54 54">
          <defs>
            <linearGradient id="win" gradientUnits="userSpaceOnUse" x1="0" y1="0" x2="54" y2="54"><stop offset="0" stopColor="#8ae2ff" /><stop offset="1" stopColor="#0a91f8" /></linearGradient>
            <linearGradient id="chat" x1="0" y1="1" x2="1" y2="0"><stop offset="0" stopColor="#5b50d0" /><stop offset="0.500" stopColor="#6a63cc" /><stop offset="1" stopColor="#7f9af5" /></linearGradient>
            <linearGradient id="fold" x1="0" y1="0" x2="1" y2="1"><stop offset="0" stopColor="#ffdf7a" /><stop offset="1" stopColor="#f8b60f" /></linearGradient>
            <linearGradient id="edge" x1="0" y1="0.300" x2="1" y2="0.500"><stop offset="0" stopColor="#2093dc" /><stop offset="0.500" stopColor="#33c1d8" /><stop offset="1" stopColor="#5fdc5a" /></linearGradient>
          </defs>
          <path d="M1 3Q1 1 3 1H26V26H1ZM28 1H51Q53 1 53 3V26H28ZM1 28H26V53H3Q1 53 1 51ZM28 28H53V51Q53 53 51 53H28Z" fill="url(#win)" />
        </svg>
      </TaskButton>
      <SearchBox>
        <svg width={34} height={34} viewBox="0 0 34 34"><path d="M23 23L32 32" stroke="#e4e4e4" strokeWidth={4} /><circle cx={14} cy={14} r={12} fill="#5b5958" stroke="#f0f0f0" strokeWidth={3} /></svg>
        <SearchInput type="text" placeholder="Search" aria-label="Search" />
        <svg width={102} height={54} viewBox="0 0 102 54">
          <path d="M2 28L12 18L4 11Q10 12 14 12Q16 3 22 4Q28 8 27 14Q34 8 39 12L37 20Q36 32 26 32Q20 30 2 28Z" fill="#fff" stroke="#3d9ae8" strokeWidth={2.500} />
          <path d="M40 8Q44 12 46 8M46 5Q54 6 50 14Q44 10 46 5M42 13L46 18" fill="none" stroke="#39a845" strokeWidth={2.500} />
          <path d="M57 12Q63 16 58 22Z" fill="#5ab2f0" /><path d="M54 22L48 32L53 35L56 23Z" fill="#2a8be0" /><path d="M46 32L53 35L38 54L36 52Z" fill="#b8760e" />
          <path d="M82 40V2M84 40L90 14M81 40L72 16M83 40L94 24M81 40L70 32" stroke="#3fae4d" strokeWidth={2} />
          <g strokeWidth={4} strokeDasharray="3 2" fill="none"><circle cx={90} cy={10} r={6} stroke="#2b86dc" /><circle cx={72} cy={15} r={6} stroke="#f05a1c" /><circle cx={92} cy={24} r={7} stroke="#f05a1c" /><circle cx={70} cy={31} r={6} stroke="#f05a1c" /></g>
          <circle cx={90} cy={10} r={3} fill="#ff9d1c" /><circle cx={72} cy={15} r={3} fill="#ffc21c" /><circle cx={92} cy={24} r={3} fill="#ff9d1c" /><circle cx={70} cy={31} r={3} fill="#2b86dc" />
          <path d="M76 38L82 40L88 36Q95 42 91 49Q85 54 78 48L71 46L78 45" fill="#2c2a29" stroke="#fff" strokeWidth={2.500} />
        </svg>
      </SearchBox>
      {taskApps.map((a) => (
        <TaskButton key={a.label} aria-label={a.label} $bg={a.bg}>
          {a.icon ? <svg width={54} height={54} viewBox="0 0 54 54" overflow="visible">{a.icon}</svg> : <FusionLogo w={54} />}
          {a.run && <RunDot $w={a.run[0]} $c={a.run[1]} />}
        </TaskButton>
      ))}
    </TaskItems>
    <Tray>
      <svg width={26} height={16} viewBox="0 0 26 16"><path d="M2 14L13 3L24 14" fill="none" stroke="#fff" strokeWidth={3} /></svg>
      <TrayGap $w={4} />
      <svg width={38} height={26} viewBox="0 0 38 26"><path d="M8 12Q10 1 20 1Q28 1 31 10L20 18Z" fill="#8d8d86" /><path d="M4 23Q-3 15 6 11Q12 8 20 14L8 24Z" fill="#c2c2bd" /><path d="M5 24L22 12Q36 8 37 18Q37 25 30 25H8Z" fill="#fff" /></svg>
      <TrayGap $w={0} />
      <svg width={38} height={30} viewBox="0 0 38 30"><g fill="none" stroke="#fff" strokeWidth={3}><path d="M2 12Q19 -8 36 12M7 17Q19 3 31 17M12 22Q19 13 26 22" /></g><circle cx={19} cy={26} r={3} fill="#fff" /></svg>
      <svg width={36} height={30} viewBox="0 0 36 30"><g fill="none" stroke="#fff" strokeWidth={2.500}><path d="M2 10H8L15 3V27L8 20H2ZM20 10Q23 15 20 20M24 6Q30 15 24 24" /><path d="M29 2Q38 15 29 28" stroke="#5f5f52" /></g></svg>
      <svg width={36} height={24} viewBox="0 0 36 24"><rect x={2} y={2} width={28} height={20} rx={4} fill="none" stroke="#fff" strokeWidth={3} /><path d="M5 5H13V19H5ZM32 8H36V16H32Z" fill="#fff" /></svg>
      <TrayGap $w={0} />
      <Clock>
        <div>7:26 AM</div>
        <div>4/8/2023</div>
      </Clock>
      <Badge>3</Badge>
    </Tray>
  </Taskbar>
);

export default function App() {
  return (
    <Shell>
      <GlobalStyle />
      <TitleBar>
        <FusionLogo w={34} />
        <TitleText>Autodesk Fusion 360 (Personal - Not for Commercial Use)</TitleText>
        <DragHandle />
        <WindowButton aria-label="Minimize"><svg width={20} height={20} viewBox="0 0 20 20"><path d="M0 10H20" stroke="#8a8a8a" strokeWidth={2} /></svg></WindowButton>
        <WindowButton aria-label="Restore"><svg width={20} height={20} viewBox="0 0 20 20" fill="none" stroke="#8a8a8a" strokeWidth={2}><rect x={1} y={5} width={14} height={14} rx={2} /><path d="M5 1H15Q19 1 19 5V15" /></svg></WindowButton>
        <WindowButton aria-label="Close"><svg width={20} height={20} viewBox="0 0 20 20"><path d="M0 0L20 20M20 0L0 20" stroke="#8a8a8a" strokeWidth={2} /></svg></WindowButton>
      </TitleBar>
      <AppFrame>
        <TopBars />
        <Viewport>
          <CupScene />
          <Overlay>
            <BrowserPanel />
            <CubeSlot><ViewCube /></CubeSlot>
            <CommentsSlot>
              <PanelBar>
                <PanelLead />
                <PanelTitle>COMMENTS</PanelTitle>
                <PlainButton aria-label="Expand comments"><svg width={22} height={22} viewBox="0 0 22 22"><circle cx={11} cy={11} r={10.500} fill="#333" /><path d="M5 11H17M11 5V17" stroke="#ddd" strokeWidth={3} /></svg></PlainButton>
                <Grip />
              </PanelBar>
            </CommentsSlot>
            <NavBar>
              {navTools.map((n) => (
                <NavTool key={n.label} aria-label={n.label} $active={n.active}>
                  <svg width={36} height={36} viewBox="0 0 36 36">{n.icon}</svg>
                  {n.caret && <Caret w={13} />}
                </NavTool>
              ))}
            </NavBar>
          </Overlay>
        </Viewport>
        <HistoryBar />
      </AppFrame>
      <SystemBar />
    </Shell>
  );
}
